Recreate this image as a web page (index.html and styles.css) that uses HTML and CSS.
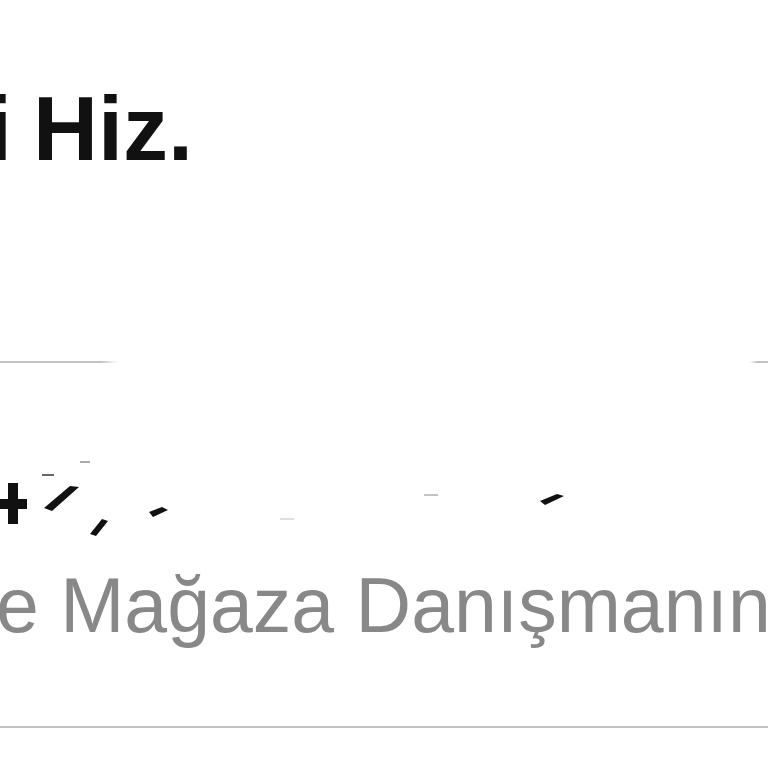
FILE: index.html
```html
<!DOCTYPE html>
<html lang="tr">
<head>
<meta charset="utf-8">
<link rel="stylesheet" href="styles.css">
</head>
<body>
<main class="page">
  <h1 class="headline">i Hiz.</h1>
  <div class="divider divider-split">
    <span class="seg seg-left"></span>
    <span class="seg seg-right"></span>
  </div>
  <div class="fragments">
    <svg class="frag-svg" width="768" height="204" viewBox="0 363 768 204" aria-hidden="true">
      <rect x="8" y="483" width="10" height="41" fill="#111"/>
      <rect x="0" y="499" width="27" height="10" fill="#111"/>
      <polygon points="44,508 70,486 79,487 52,511" fill="#111"/>
      <polygon points="90,534 102,519 108,521 96,536" fill="#111"/>
      <polygon points="149,512 162,507 168,510 153,517" fill="#111"/>
      <polygon points="540,501 557,494 564,496 545,505" fill="#111"/>
      <rect x="42" y="474" width="12" height="2" fill="#666"/>
      <rect x="80" y="461" width="10" height="2" fill="#aaa"/>
      <rect x="424" y="494" width="14" height="2" fill="#c4c4c4"/>
      <rect x="280" y="518" width="14" height="2" fill="#e0e0e0"/>
    </svg>
  </div>
  <p class="subline">e Mağaza Danışmanın</p>
  <div class="divider divider-full"></div>
</main>
</body>
</html>
```

FILE: styles.css
```css
html, body {
  margin: 0;
  padding: 0;
  background: #ffffff;
}
.page {
  width: 768px;
  height: 768px;
  overflow: hidden;
  font-family: "Liberation Sans", Arial, sans-serif;
}
.headline {
  margin: 84px 0 0 0;
  font-size: 90px;
  line-height: 90px;
  height: 90px;
  font-weight: 700;
  color: #111111;
  white-space: nowrap;
  text-indent: -13px;
  word-spacing: -4px;
  letter-spacing: 0;
}
.divider {
  height: 2px;
}
.divider-split {
  margin-top: 187px;
  display: flex;
  justify-content: space-between;
}
.seg {
  display: block;
  height: 2px;
}
.seg-left {
  width: 118px;
  background: linear-gradient(to right, #c2c2c2 85%, rgba(194,194,194,0));
}
.seg-right {
  width: 18px;
  background: linear-gradient(to left, #c2c2c2 60%, rgba(194,194,194,0));
}
.fragments {
  height: 204px;
}
.frag-svg {
  display: block;
}
.subline {
  margin: 0;
  font-size: 77px;
  line-height: 77px;
  height: 77px;
  color: #888888;
  white-space: nowrap;
  text-indent: -4px;
}
.divider-full {
  margin-top: 82px;
  background: #c2c2c2;
}
```
